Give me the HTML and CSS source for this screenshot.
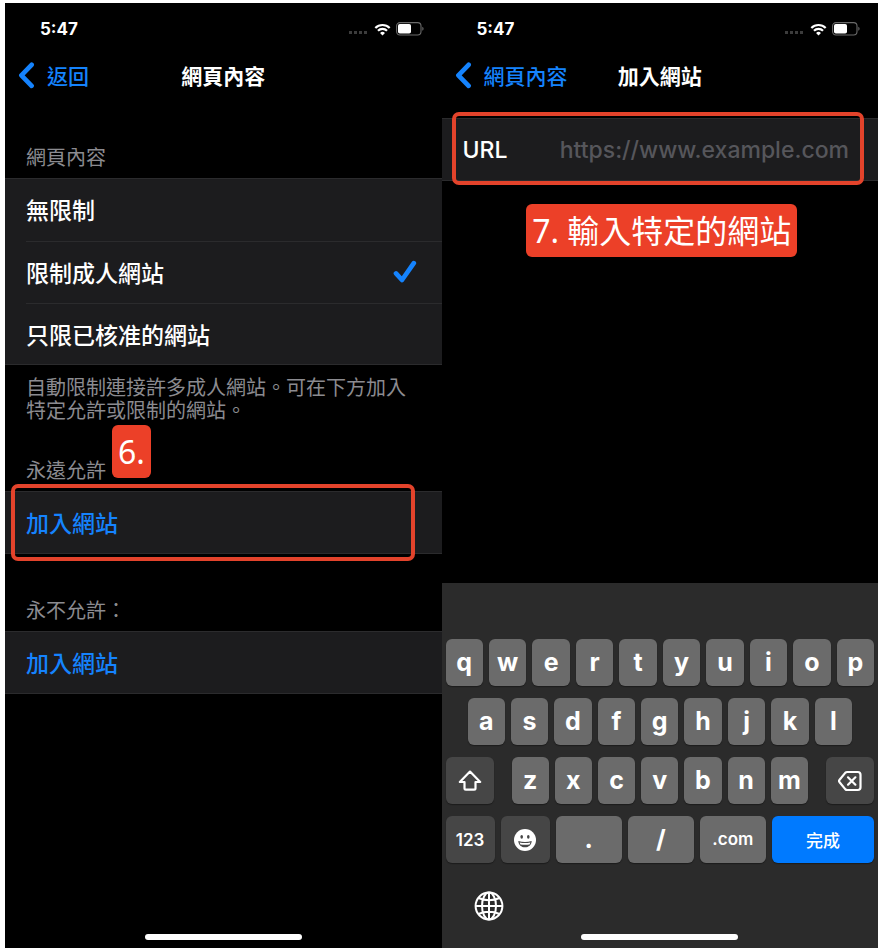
FILE: index.html
```html
<!DOCTYPE html>
<html lang="zh-Hant">
<head>
<meta charset="utf-8">
<meta name="viewport" content="width=device-width, initial-scale=1">
<title>網頁內容</title>
<link rel="stylesheet" href="styles.css">
</head>
<body>
<svg class="sprite" aria-hidden="true">
  <symbol id="wifi" viewBox="0 0 18 13">
    <path d="M1.4 4.9a10.8 10.8 0 0 1 15.2 0M4.2 7.8a6.8 6.8 0 0 1 9.6 0" fill="none" stroke="#fff" stroke-width="2.3"/>
    <path d="M9 12.8 6.4 10.1a3.7 3.7 0 0 1 5.2 0z" fill="#fff"/>
  </symbol>
  <symbol id="battery" viewBox="0 0 28 14">
    <rect x="0.6" y="0.6" width="24.4" height="12.4" rx="3.4" fill="none" stroke="#6a6a6a" stroke-width="1.1"/>
    <rect x="2" y="2" width="13" height="9.6" rx="1.8" fill="#fff"/>
    <path d="M26.3 4.8v4a2.2 2.2 0 0 0 0-4z" fill="#6a6a6a"/>
  </symbol>
  <symbol id="back" viewBox="0 0 18 28">
    <path d="M14.6 3.8 4.4 14.3l10.2 10.5" fill="none" stroke="#1583fd" stroke-width="4.7" stroke-linecap="round" stroke-linejoin="round"/>
  </symbol>
</svg>

<main class="screens">
  <section class="phone">
    <div class="status">
      <span class="time">5:47</span>
      <span class="signals"><i class="dots"></i><svg class="wifi"><use href="#wifi"/></svg><svg class="battery"><use href="#battery"/></svg></span>
    </div>
    <header class="nav">
      <a class="back" href="#"><svg class="chevron"><use href="#back"/></svg>返回</a>
      <h1 class="title">網頁內容</h1>
    </header>

    <form class="settings">
      <h2 class="caption caption-first">網頁內容</h2>
      <div class="group">
        <label class="row"><input class="choice" type="radio" name="limit"><span class="row-text">無限制</span></label>
        <label class="row"><input class="choice" type="radio" name="limit" checked><span class="row-text">限制成人網站<svg class="check" viewBox="0 0 24 24"><path d="M3 13.4 9 20 20.8 3.2" fill="none" stroke="#1583fd" stroke-width="4.7" stroke-linecap="round" stroke-linejoin="round"/></svg></span></label>
        <label class="row"><input class="choice" type="radio" name="limit"><span class="row-text">只限已核准的網站</span></label>
      </div>
      <p class="note">自動限制連接許多成人網站。可在下方加入特定允許或限制的網站。</p>

      <h2 class="caption caption-allow">永遠允許<span class="badge badge-over">6.</span></h2>
      <div class="group marked">
        <button class="row add" type="button">加入網站</button>
        <span class="frame frame-add"></span>
      </div>

      <h2 class="caption caption-deny">永不允許：</h2>
      <div class="group">
        <button class="row add" type="button">加入網站</button>
      </div>
    </form>
    <div class="home"></div>
  </section>

  <section class="phone">
    <div class="status">
      <span class="time">5:47</span>
      <span class="signals"><i class="dots"></i><svg class="wifi"><use href="#wifi"/></svg><svg class="battery"><use href="#battery"/></svg></span>
    </div>
    <header class="nav">
      <a class="back" href="#"><svg class="chevron"><use href="#back"/></svg>網頁內容</a>
      <h1 class="title">加入網站</h1>
    </header>

    <div class="group marked url-group">
      <div class="row url-row">
        <label class="url-label" for="url">URL</label>
        <input class="url-input" id="url" type="url" placeholder="https://www.example.com">
      </div>
      <span class="frame frame-url"></span>
    </div>
    <p class="badge badge-step">7. 輸入特定的網站</p>

    <div class="keyboard">
      <div class="keys">
        <button class="key">q</button><button class="key">w</button><button class="key">e</button><button class="key">r</button><button class="key">t</button><button class="key">y</button><button class="key">u</button><button class="key">i</button><button class="key">o</button><button class="key">p</button>
      </div>
      <div class="keys keys-inset">
        <button class="key">a</button><button class="key">s</button><button class="key">d</button><button class="key">f</button><button class="key">g</button><button class="key">h</button><button class="key">j</button><button class="key">k</button><button class="key">l</button>
      </div>
      <div class="keys keys-shift">
        <button class="key dark" aria-label="Shift"><svg class="key-icon" viewBox="0 0 24 24"><path d="M12 2.6 1.8 13h4.7v6.2c0 .9.5 1.4 1.4 1.4h8.2c.9 0 1.4-.5 1.4-1.4V13h4.7z" fill="none" stroke="#fff" stroke-width="2.2" stroke-linejoin="round"/></svg></button>
        <div class="keys keys-mid">
          <button class="key">z</button><button class="key">x</button><button class="key">c</button><button class="key">v</button><button class="key">b</button><button class="key">n</button><button class="key">m</button>
        </div>
        <button class="key dark" aria-label="Delete"><svg class="key-icon" viewBox="0 0 24 24"><path d="M9.2 3h10.6c1.7 0 2.7 1 2.7 2.7v12.6c0 1.7-1 2.7-2.7 2.7H9.2c-.8 0-1.4-.3-2-.9L1.6 13.3q-1.2-1.3 0-2.6L7.2 3.9c.6-.6 1.2-.9 2-.9z" fill="none" stroke="#fff" stroke-width="2.2"/><path d="m10 8.3 7.4 7.4m0-7.4L10 15.7" stroke="#fff" stroke-width="2.2" stroke-linecap="round"/></svg></button>
      </div>
      <div class="keys keys-bottom">
        <button class="key dark small">123</button>
        <button class="key dark" aria-label="Emoji"><svg class="key-icon" viewBox="0 0 24 24"><circle cx="12" cy="12" r="11" fill="#fff"/><ellipse cx="8.7" cy="8.8" rx="1.3" ry="1.9" fill="#464646"/><ellipse cx="15.3" cy="8.8" rx="1.3" ry="1.9" fill="#464646"/><path d="M5.3 13c4.4 1.2 9 1.2 13.4 0-.3 4-3 6.3-6.7 6.3S5.6 17 5.3 13z" fill="#464646"/><path d="M6.6 14.5c3.6.8 7.2.8 10.8 0-.2.8-.5 1.4-.9 1.9-3 .6-6 .6-9 0-.4-.5-.7-1.1-.9-1.9z" fill="#fff"/></svg></button>
        <button class="key">.</button>
        <button class="key">/</button>
        <button class="key small">.com</button>
        <button class="key done">完成</button>
      </div>
      <button class="globe" aria-label="Globe"><svg class="globe-icon" viewBox="0 0 30 30"><g fill="none" stroke="#fff" stroke-width="2"><circle cx="15" cy="15" r="13.4"/><ellipse cx="15" cy="15" rx="7" ry="13.4"/><path d="M15 1.6v26.8M1.6 15h26.8M4.6 7c6 3 14.8 3 20.8 0M4.6 23c6-3 14.8-3 20.8 0"/></g></svg></button>
    </div>
    <div class="home"></div>
  </section>
</main>
</body>
</html>
```
FILE: styles.css
```css
* {
  box-sizing: border-box;
}

body {
  margin: 0;
  padding: 3px 2px 2px 5px;
  min-height: 100vh;
  display: flex;
  background: #fff;
  color: #fff;
  font-family: Inter, "Noto Sans CJK TC", sans-serif;
}

button,
input {
  font-family: inherit;
  color: inherit;
  border: 0;
  margin: 0;
  padding: 0;
}

h1,
h2,
p {
  margin: 0;
}

.sprite {
  position: absolute;
  width: 0;
  height: 0;
}

.screens {
  flex: 1;
  display: grid;
  grid-template-columns: 1fr 1fr;
}

.phone {
  position: relative;
  display: flex;
  flex-direction: column;
  min-width: 0;
  background: #000;
}

/* Status bar */
.status {
  display: flex;
  justify-content: space-between;
  align-items: center;
  height: 52px;
  padding: 0 18px 0 35px;
}

.time {
  font-size: 17px;
  font-weight: 700;
}

.signals {
  display: flex;
  align-items: center;
}

.dots {
  width: 20px;
  height: 3px;
  margin: 7px 5px 0 0;
  background: repeating-linear-gradient(90deg, #3c3c3c 0 3px, #000 3px 5px);
}

.wifi {
  width: 17px;
  height: 13px;
  margin-right: 5px;
}

.battery {
  width: 28px;
  height: 14px;
}

/* Navigation bar */
.nav {
  display: grid;
  grid-template-columns: 1fr auto 1fr;
  align-items: center;
  height: 42px;
  padding: 0 12px 2px;
  font-size: 21px;
}

.back {
  display: flex;
  align-items: center;
  gap: 12px;
  color: #1583fd;
  font-weight: 500;
  text-decoration: none;
}

.chevron {
  width: 18px;
  height: 28px;
}

.title {
  font-size: 21px;
  font-weight: 700;
}

/* Settings list */
.caption {
  position: relative;
  padding: 0 21px;
  color: #8b8b90;
  font-size: 20px;
  font-weight: 400;
  line-height: 24px;
}

.caption-first {
  margin: 49px 0 8px;
}

.caption-allow {
  margin: 36px 0 8px;
}

.caption-deny {
  margin: 45px 0 8px;
}

.group {
  background: #1c1c1e;
  border-top: 1px solid #2b2b2d;
  box-shadow: inset 0 -1px #2b2b2d;
}

.row {
  display: flex;
  align-items: center;
  width: 100%;
  height: 62px;
  padding-left: 21px;
  font-size: 23px;
  font-weight: 500;
}

.row-text {
  flex: 1;
  display: flex;
  align-items: center;
  justify-content: space-between;
  height: 100%;
  padding: 0 25px 2px 0;
}

.row + .row .row-text {
  border-top: 1px solid #2b2b2d;
}

.choice {
  position: absolute;
  opacity: 0;
}

.check {
  width: 24px;
  height: 24px;
  visibility: hidden;
}

.choice:checked + .row-text .check {
  visibility: visible;
}

.add {
  padding-bottom: 2px;
  background: none;
  color: #1583fd;
  text-align: left;
}

.note {
  padding: 12px 28px 0 21px;
  color: #8b8b90;
  font-size: 20px;
  line-height: 23px;
}

/* Step annotations */
.marked {
  position: relative;
}

.frame {
  position: absolute;
  border: 4px solid #e3432b;
  border-radius: 7px;
  pointer-events: none;
}

.frame-add {
  inset: -8px 27px -7px 6px;
}

.frame-url {
  inset: -7px 14px -4px 10px;
}

.badge {
  padding: 0 6px;
  border-radius: 6px;
  background: #ec4028;
  color: #fff;
  font-family: "Noto Sans", "Noto Sans CJK TC", sans-serif;
  font-size: 32px;
  font-weight: 400;
  line-height: 53px;
}

.badge-over {
  position: absolute;
  left: 107px;
  bottom: 5px;
}

.badge-step {
  align-self: center;
  margin: 23px 0 0 4px;
}

/* URL entry */
.url-group {
  margin-top: 21px;
}

.url-row {
  gap: 20px;
  padding-right: 29px;
}

.url-input {
  flex: 1;
  min-width: 0;
  background: none;
  outline: 0;
  font-size: 23px;
  font-weight: 500;
  text-align: right;
}

.url-input::placeholder {
  color: #56565b;
  opacity: 1;
}

/* Keyboard */
.keyboard {
  display: flex;
  flex-direction: column;
  gap: 12px;
  margin-top: auto;
  padding: 56px 4px 27px;
  background: #2b2b2b;
}

.keys {
  display: grid;
  grid-auto-flow: column;
  grid-auto-columns: 1fr;
  gap: 6px;
}

.keys-inset {
  padding: 0 22px;
}

.keys-shift {
  grid-auto-flow: row;
  grid-template-columns: 48fr 296fr 48fr;
  gap: 18px;
}

.keys-bottom {
  grid-auto-flow: row;
  grid-template-columns: 49fr 49fr 66fr 66fr 66fr 102fr;
}

.key {
  display: flex;
  align-items: center;
  justify-content: center;
  min-width: 0;
  height: 47px;
  padding-bottom: 2px;
  border-radius: 6px;
  background: #6b6b6b;
  box-shadow: 0 1px 1px #1c1c1c;
  font-size: 25px;
  font-weight: 700;
}

.dark {
  padding-bottom: 0;
  background: #464646;
}

.small {
  font-size: 17px;
  font-weight: 600;
}

.done {
  padding-bottom: 0;
  background: #007aff;
  font-size: 17px;
  font-weight: 500;
}

.key-icon {
  width: 24px;
  height: 24px;
}

.globe {
  align-self: flex-start;
  margin: 16px 0 0 28px;
  background: none;
}

.globe-icon {
  display: block;
  width: 30px;
  height: 30px;
}

.home {
  position: absolute;
  bottom: 8px;
  left: 32%;
  width: 36%;
  height: 6px;
  border-radius: 3px;
  background: #fff;
}
```
